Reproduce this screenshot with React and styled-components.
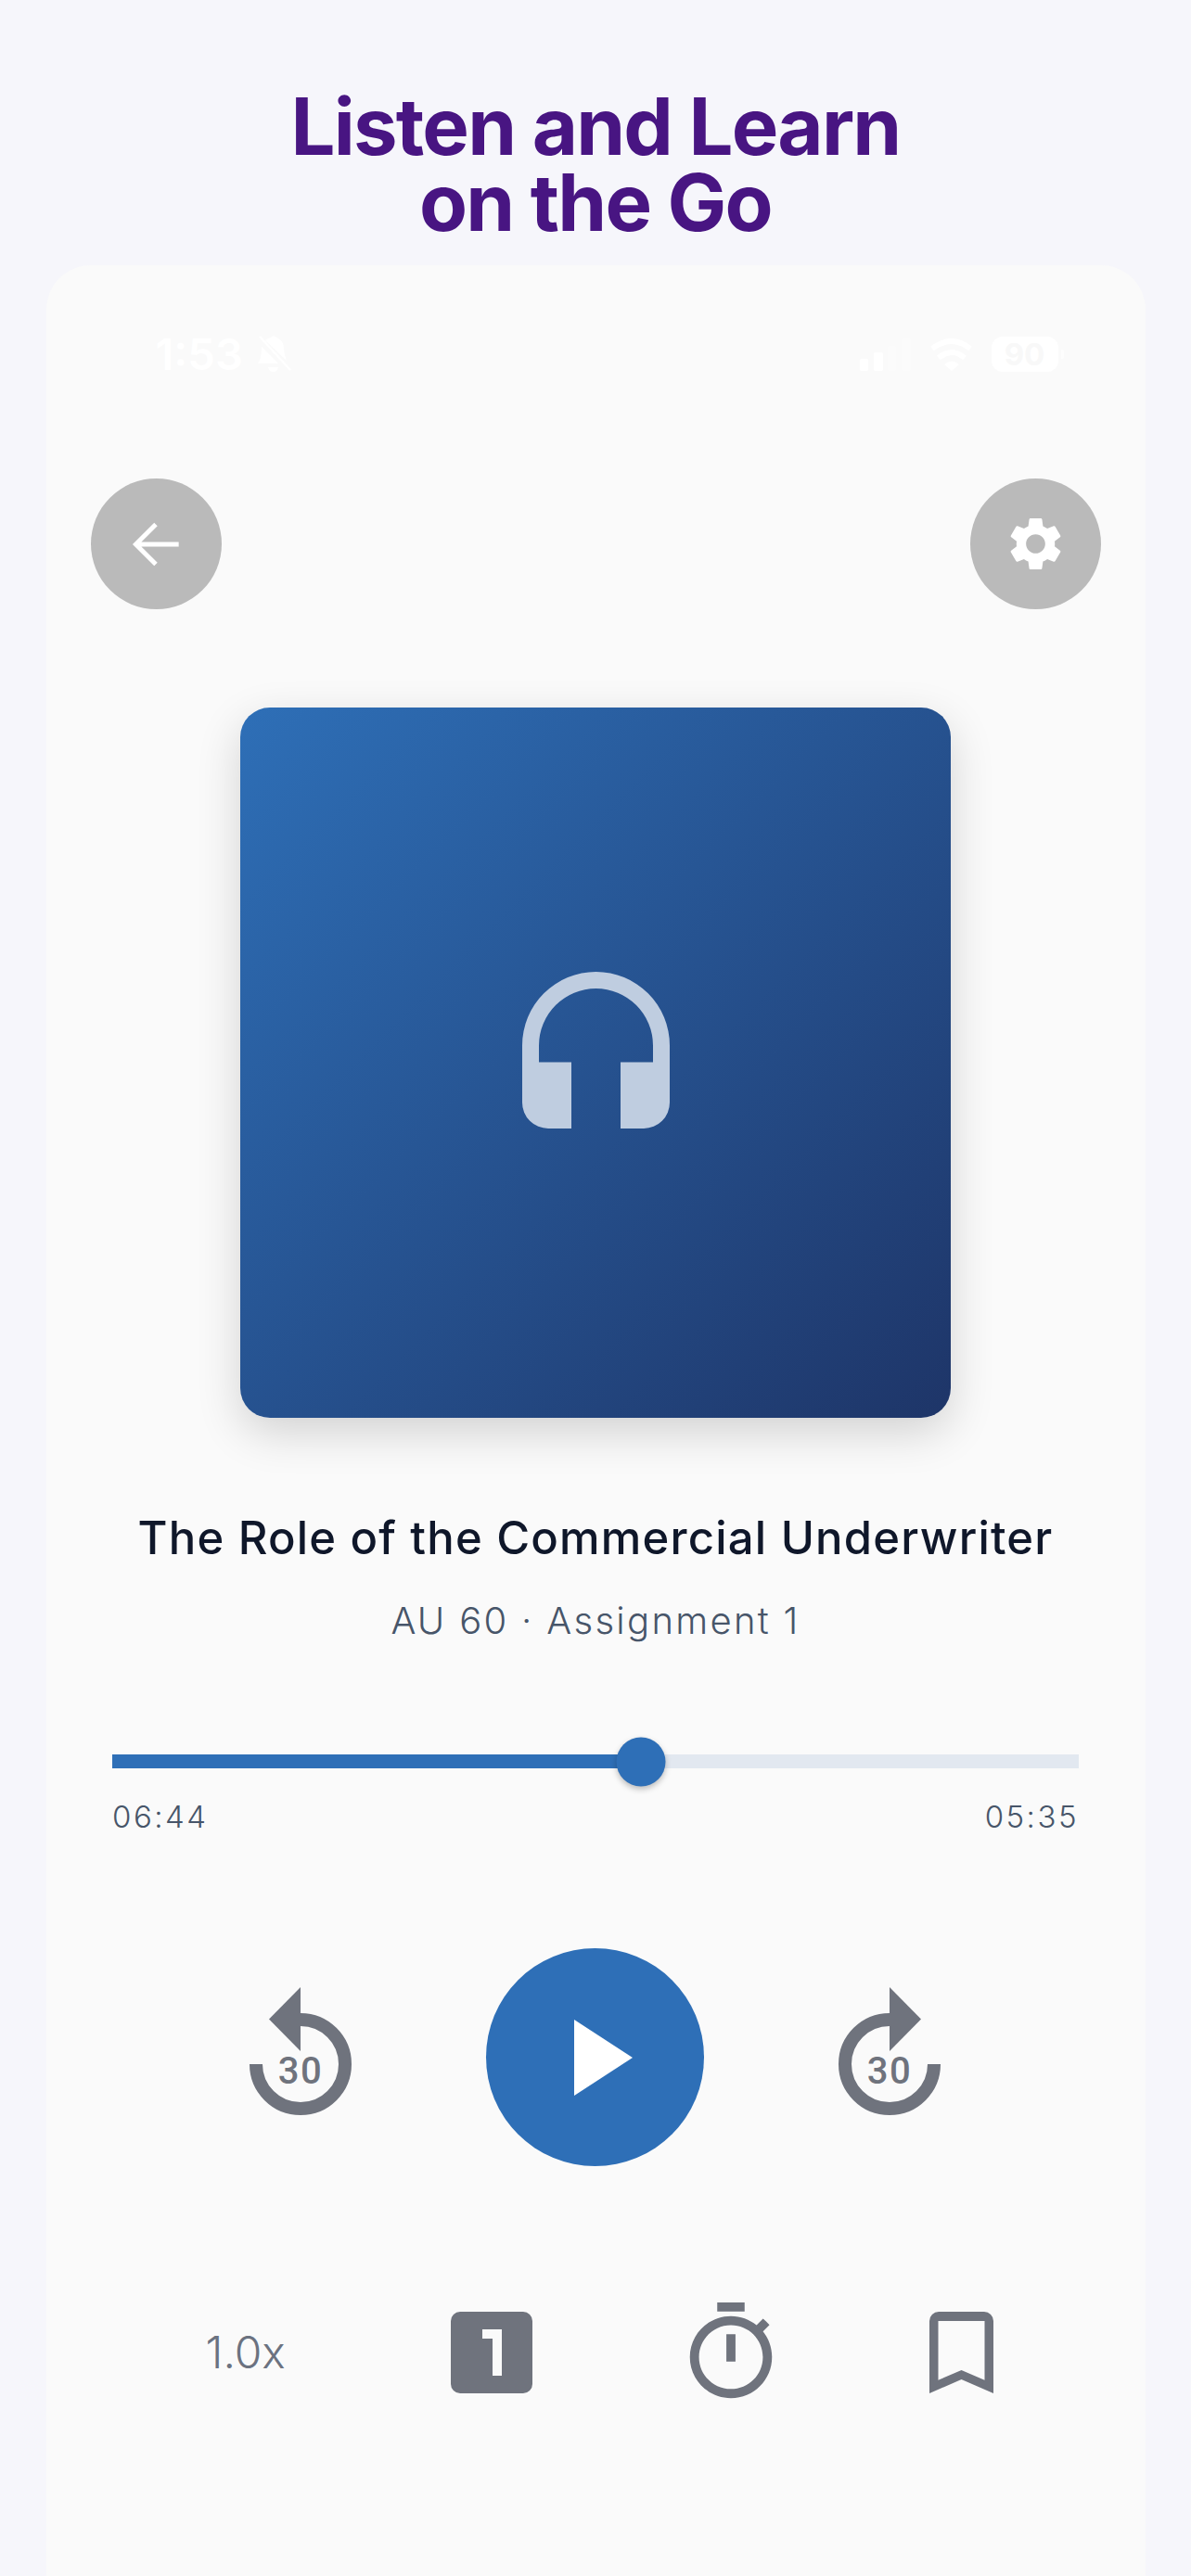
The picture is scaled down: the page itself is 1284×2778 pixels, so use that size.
import React from "react";
import styled, { createGlobalStyle } from "styled-components";

const elapsed = 404;
const remaining = 335;

const GlobalStyle = createGlobalStyle`
  html, body {
    margin: 0;
    padding: 0;
    background: #f6f6fb;
  }
  body {
    font-family: "Inter", "Liberation Sans", sans-serif;
  }
`;

const Page = styled.div`
  width: 1284px;
  height: 2778px;
  overflow: hidden;
  display: flex;
  flex-direction: column;
  align-items: center;
  background: #f6f6fb;
`;

const Headline = styled.h1`
  margin: 0;
  padding-top: 96px;
  height: 286px;
  flex: none;
  box-sizing: border-box;
  text-align: center;
  font-size: 85px;
  line-height: 82px;
  font-weight: 700;
  letter-spacing: -1.8px;
  color: #481582;
`;

const Phone = styled.main`
  width: 1185px;
  flex: 1;
  box-sizing: border-box;
  padding-top: 76px;
  background: #fafafa;
  border-radius: 48px 48px 0 0;
  display: flex;
  flex-direction: column;
  align-items: center;
`;

const StatusBar = styled.div`
  width: 100%;
  height: 40px;
  box-sizing: border-box;
  padding: 0 94px 0 118px;
  display: flex;
  align-items: center;
  justify-content: space-between;
  color: #ffffff;
`;

const StatusGroup = styled.div`
  display: flex;
  align-items: center;
  gap: ${(p) => p.$gap}px;
`;

const Clock = styled.span`
  font-size: 47px;
  line-height: 40px;
  font-weight: 600;
`;

const Battery = styled.div`
  position: relative;
  width: 72px;
  height: 38px;
  border-radius: 12px;
  background: #ffffff;
  color: #f8f8f8;
  font-size: 33px;
  line-height: 38px;
  font-weight: 700;
  text-align: center;

  &::after {
    content: "";
    position: absolute;
    top: 14px;
    right: -6px;
    width: 3px;
    height: 10px;
    border-radius: 0 2px 2px 0;
    background: #ffffff;
    opacity: 0.6;
  }
`;

const NavRow = styled.nav`
  width: 100%;
  box-sizing: border-box;
  margin-top: 114px;
  padding: 0 48px;
  display: flex;
  justify-content: space-between;
`;

const RoundButton = styled.button`
  width: 141px;
  height: 141px;
  padding: 0;
  border: 0;
  border-radius: 50%;
  background: #bababa;
  display: flex;
  align-items: center;
  justify-content: center;
`;

const Artwork = styled.div`
  width: 766px;
  height: 766px;
  flex: none;
  box-sizing: border-box;
  margin-top: 106px;
  padding-bottom: 27px;
  border-radius: 32px;
  background: linear-gradient(135deg, #2e6fb7 0%, #1e3568 100%);
  box-shadow: 0 16px 48px rgba(0, 0, 0, 0.16);
  display: flex;
  align-items: center;
  justify-content: center;
`;

const Title = styled.h2`
  margin: 100px 0 0;
  font-size: 49px;
  line-height: 60px;
  font-weight: 500;
  letter-spacing: 1.2px;
  color: #0f172a;
`;

const Subtitle = styled.p`
  margin: 34px 0 0;
  font-size: 40px;
  line-height: 50px;
  font-weight: 300;
  letter-spacing: 2.3px;
  color: #475569;
`;

const Progress = styled.section`
  width: 1042px;
  margin-top: 119px;
`;

const Track = styled.div`
  position: relative;
  height: 15px;
  background: #e2e8f0;
`;

const Fill = styled.div`
  height: 100%;
  background: #2e6fb7;
`;

const Thumb = styled.div`
  position: absolute;
  top: 50%;
  width: 53px;
  height: 53px;
  border-radius: 50%;
  transform: translate(-50%, -50%);
  background: #2e6fb7;
  box-shadow: 0 3px 6px rgba(0, 0, 0, 0.25);
`;

const Times = styled.div`
  margin-top: 32px;
  display: flex;
  justify-content: space-between;
  font-size: 33px;
  line-height: 40px;
  font-weight: 300;
  letter-spacing: 2.5px;
  color: #475569;
`;

const Transport = styled.div`
  margin: 122px 1px 0 0;
  display: flex;
  align-items: center;
  gap: 145px;
`;

const PlayButton = styled.button`
  width: 235px;
  height: 235px;
  padding: 0;
  border: 0;
  border-radius: 50%;
  background: #2e6fb7;
  display: flex;
  align-items: center;
  justify-content: center;
`;

const SkipWrap = styled.div`
  display: flex;
  margin-bottom: 14px;
`;

const Tools = styled.div`
  margin: 142px 0 0 8px;
  display: flex;
  align-items: center;
  gap: 155px;
`;

const Speed = styled.span`
  width: 87px;
  margin-right: 22px;
  font-size: 48px;
  line-height: 88px;
  font-weight: 300;
  white-space: nowrap;
  color: #6b7280;
`;

const ToolIcon = styled.svg`
  display: block;
  fill: #6f737d;
`;

const ArrowBack = () => (
  <svg width="74" height="74" viewBox="0 0 24 24" fill="none" stroke="#fff" strokeWidth="1.6">
    <path d="M20 12H5M12 5l-7 7 7 7" />
  </svg>
);

const Gear = () => (
  <svg width="69" height="69" viewBox="0 0 24 24" fill="#fff">
    <path d="M19.14 12.94c.04-.3.06-.61.06-.94 0-.32-.02-.64-.07-.94l2.03-1.58c.18-.14.23-.41.12-.61l-1.92-3.32c-.12-.22-.37-.29-.59-.22l-2.39.96c-.5-.38-1.03-.7-1.62-.94l-.36-2.54c-.04-.24-.24-.41-.48-.41h-3.84c-.24 0-.43.17-.47.41l-.36 2.54c-.59.24-1.13.57-1.62.94l-2.39-.96c-.22-.08-.47 0-.59.22L2.74 8.87c-.12.21-.08.47.12.61l2.03 1.58c-.05.3-.09.63-.09.94s.02.64.07.94l-2.03 1.58c-.18.14-.23.41-.12.61l1.92 3.32c.12.22.37.29.59.22l2.39-.96c.5.38 1.03.7 1.62.94l.36 2.54c.05.24.24.41.48.41h3.84c.24 0 .44-.17.47-.41l.36-2.54c.59-.24 1.13-.56 1.62-.94l2.39.96c.22.08.47 0 .59-.22l1.92-3.32c.12-.22.07-.47-.12-.61l-2.01-1.58zM12 15.6c-1.98 0-3.6-1.62-3.6-3.6s1.62-3.6 3.6-3.6 3.6 1.62 3.6 3.6-1.62 3.6-3.6 3.6z" />
  </svg>
);

const Headphones = () => (
  <svg width="159" height="169" viewBox="0 0 159 169" fill="#bfcde0">
    <path d="M0 79.5A79.5 79.5 0 0 1 159 79.5V141A28 28 0 0 1 131 169H106V97.5H141V79.5A61.5 61.5 0 0 0 18 79.5V97.5H53V169H28A28 28 0 0 1 0 141Z" />
  </svg>
);

const BellOff = () => (
  <svg width="37" height="40" viewBox="0 0 37 40" fill="#fff">
    <path d="M9 5C11 3 14 2.500 15 2C16 0 20 0 21 2C27 4 29 9 29 14C29.500 20 31 24 32 27Z" />
    <path d="M5 12L23 30H1C3 27 5 23 5 12Z" />
    <path d="M12 34H23C22 38 20 39 17.500 39C15 39 13 38 12 34Z" />
    <path d="M3 1L36 37" stroke="#fff" strokeWidth="2.5" />
  </svg>
);

const Signal = () => (
  <svg width="55" height="35" viewBox="0 0 55 35" fill="#fff">
    <rect x="0" y="22" width="9" height="13" rx="2" />
    <rect x="15" y="15" width="10" height="20" rx="2" />
    <rect x="30" y="8" width="9" height="27" rx="2" opacity="0.25" />
    <rect x="45" y="0" width="10" height="35" rx="2" opacity="0.25" />
  </svg>
);

const Wifi = () => (
  <svg width="47" height="35" viewBox="0 0 47 35" fill="none" stroke="#fff" strokeWidth="6">
    <path d="M3 11Q23.500 -5 44 11M10 21Q24 9 38 21" />
    <path d="M16 28Q24 21 32 28L24 35Z" fill="#fff" stroke="none" />
  </svg>
);

const Replay = ({ flip }) => (
  <svg width="110" height="138" viewBox="0 0 110 138">
    <g fill="#6f737d" transform={flip ? "translate(110 0) scale(-1 1)" : undefined}>
      <path d="M7 83A48 48 0 1 0 55 35" fill="none" stroke="#6f737d" strokeWidth="14" />
      <path d="M21 34.500L55 0V69Z" />
    </g>
    <text
      x="55"
      y="104"
      textAnchor="middle"
      fontFamily="Roboto, sans-serif"
      fontWeight="500"
      fontSize="40"
      letterSpacing="1.5"
      fill="#6f737d"
    >
      30
    </text>
  </svg>
);

const PlayGlyph = () => (
  <svg width="63" height="82" viewBox="0 0 63 82" fill="#fff" style={{ marginLeft: 18 }}>
    <path d="M0 0L63 41L0 82Z" />
  </svg>
);

const LooksOne = () => (
  <ToolIcon width="88" height="88" viewBox="0 0 88 88">
    <path
      fillRule="evenodd"
      d="M10 0H78A10 10 0 0 1 88 10V78A10 10 0 0 1 78 88H10A10 10 0 0 1 0 78V10A10 10 0 0 1 10 0ZM34 19V29H45V69H55V19Z"
    />
  </ToolIcon>
);

const Timer = () => (
  <ToolIcon width="118" height="118" viewBox="0 0 24 24">
    <path d="M15 1H9v2h6V1zm-4 13h2V8h-2v6zm8.030-6.610 1.420-1.420c-.43-.51-.9-.99-1.410-1.410l-1.420 1.420C16.070 4.740 14.120 4 12 4c-4.970 0-9 4.030-9 9s4.020 9 9 9 9-4.030 9-9c0-2.120-.74-4.070-1.970-5.610zM12 20c-3.870 0-7-3.130-7-7s3.130-7 7-7 7 3.130 7 7-3.130 7-7 7z" />
  </ToolIcon>
);

const Bookmark = () => (
  <ToolIcon width="69" height="88" viewBox="0 0 69 88">
    <path
      fillRule="evenodd"
      d="M0 88V10A10 10 0 0 1 10 0H59A10 10 0 0 1 69 10V88L34.500 73ZM9.500 10V73.700L34.500 63L59.500 73.700V10Z"
    />
  </ToolIcon>
);

const formatTime = (s) =>
  `${String(Math.floor(s / 60)).padStart(2, "0")}:${String(s % 60).padStart(2, "0")}`;

export default function App() {
  const progress = (elapsed / (elapsed + remaining)) * 100;

  return (
    <Page>
      <GlobalStyle />
      <Headline>
        Listen and Learn
        <br />
        on the Go
      </Headline>
      <Phone>
        <StatusBar>
          <StatusGroup $gap={15}>
            <Clock>1:53</Clock>
            <BellOff />
          </StatusGroup>
          <StatusGroup $gap={20}>
            <Signal />
            <Wifi />
            <Battery>90</Battery>
          </StatusGroup>
        </StatusBar>
        <NavRow>
          <RoundButton aria-label="Back">
            <ArrowBack />
          </RoundButton>
          <RoundButton aria-label="Settings">
            <Gear />
          </RoundButton>
        </NavRow>
        <Artwork>
          <Headphones />
        </Artwork>
        <Title>The Role of the Commercial Underwriter</Title>
        <Subtitle>AU 60 · Assignment 1</Subtitle>
        <Progress>
          <Track>
            <Fill style={{ width: `${progress}%` }} />
            <Thumb style={{ left: `${progress}%` }} />
          </Track>
          <Times>
            <span>{formatTime(elapsed)}</span>
            <span>{formatTime(remaining)}</span>
          </Times>
        </Progress>
        <Transport>
          <SkipWrap>
            <Replay />
          </SkipWrap>
          <PlayButton aria-label="Play">
            <PlayGlyph />
          </PlayButton>
          <SkipWrap>
            <Replay flip />
          </SkipWrap>
        </Transport>
        <Tools>
          <Speed>1.0x</Speed>
          <LooksOne />
          <Timer />
          <Bookmark />
        </Tools>
      </Phone>
    </Page>
  );
}
